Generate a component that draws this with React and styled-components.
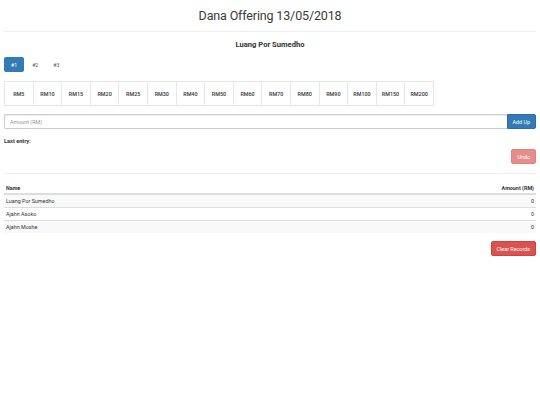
import React from 'react'
import styled, { createGlobalStyle } from 'styled-components'

const GlobalStyle = createGlobalStyle`
  * { box-sizing: border-box; }
  body {
    margin: 0;
    background: #fff;
    font-family: Roboto, "Liberation Sans", sans-serif;
    font-size: 5.6px;
    color: #333;
  }
`

const Page = styled.div`
  padding: 0 4px;
`

const Title = styled.h1`
  margin: 8px 0 0;
  font-size: 12.5px;
  line-height: 16px;
  font-weight: 400;
  letter-spacing: -0.15px;
  text-align: center;
  color: #3a3a3a;
`

const Rule = styled.hr`
  margin: ${p => p.$top || 6}px 0 0;
  border: 0;
  border-top: 1px solid #eee;
`

const Subtitle = styled.h4`
  margin: 8px 0 0;
  font-size: 7.6px;
  line-height: 10px;
  font-weight: 700;
  text-align: center;
`

const Tabs = styled.ul`
  display: flex;
  gap: 1px;
  list-style: none;
  margin: 7px 0 0;
  padding: 0;
`

const Tab = styled.li`
  height: 15px;
  padding: 0 7px;
  display: flex;
  align-items: center;
  border-radius: 2px;
  font-size: 5.2px;
  color: ${p => (p.$active ? '#fff' : '#555')};
  background: ${p => (p.$active ? '#337ab7' : 'transparent')};
`

const Amounts = styled.div`
  display: flex;
  margin-top: 9px;
`

const AmountBtn = styled.button`
  width: 29.6px;
  height: 25px;
  padding: 0;
  margin-left: ${p => (p.$first ? 0 : -1)}px;
  border: 1px solid #e6e6e6;
  background: #fff;
  font-family: inherit;
  font-size: 5.4px;
  font-weight: 500;
  color: #333;
`

const InputGroup = styled.div`
  display: flex;
  margin-top: 8px;
`

const Input = styled.input`
  flex: 1;
  height: 15px;
  padding: 0 5px;
  border: 1px solid #ccc;
  border-right: 0;
  border-radius: 2px 0 0 2px;
  font-family: inherit;
  font-size: 5.4px;
  color: #555;
  box-shadow: inset 0 1px 1px rgba(0, 0, 0, 0.075);
  &::placeholder { color: #999; }
`

const Button = styled.button`
  height: ${p => p.$h || 15}px;
  padding: 0 ${p => p.$px || 5}px;
  border: 1px solid ${p => p.$border};
  border-radius: ${p => p.$radius || '2px'};
  background: ${p => p.$bg};
  opacity: ${p => p.$faded ? 0.65 : 1};
  color: #fff;
  font-family: inherit;
  font-size: 5.4px;
`

const Label = styled.div`
  margin-top: 8px;
  font-size: 5.6px;
  font-weight: 700;
  line-height: 8px;
`

const RightRow = styled.div`
  display: flex;
  justify-content: flex-end;
  margin-top: ${p => p.$top}px;
`

const Table = styled.table`
  width: 100%;
  margin-top: 8px;
  border-collapse: collapse;
  font-size: 5.4px;
`

const Th = styled.th`
  height: 12px;
  padding: 0 2px 2px;
  text-align: ${p => p.$align || 'left'};
  font-weight: 700;
  border-bottom: 2px solid #ddd;
  vertical-align: bottom;
`

const Tr = styled.tr`
  background: ${p => (p.$striped ? '#f9f9f9' : '#fff')};
`

const Td = styled.td`
  height: 13px;
  padding: 0 2px;
  border-top: 1px solid #ddd;
  text-align: ${p => p.$align || 'left'};
`

const amounts = [5, 10, 15, 20, 25, 30, 40, 50, 60, 70, 80, 90, 100, 150, 200]
const rows = ['Luang Por Sumedho', 'Ajahn Asoko', 'Ajahn Moshe']

export default function App() {
  return (
    <Page>
      <GlobalStyle />
      <Title>Dana Offering 13/05/2018</Title>
      <Rule $top={7} />
      <Subtitle>Luang Por Sumedho</Subtitle>
      <Tabs>
        <Tab $active>#1</Tab>
        <Tab>#2</Tab>
        <Tab>#3</Tab>
      </Tabs>
      <Amounts>
        {amounts.map((a, i) => (
          <AmountBtn key={a} $first={i === 0}>RM{a}</AmountBtn>
        ))}
      </Amounts>
      <InputGroup>
        <Input placeholder="Amount (RM)" />
        <Button $h={15} $px={5} $bg="#337ab7" $border="#2e6da4" $radius="0 2px 2px 0">Add Up</Button>
      </InputGroup>
      <Label>Last entry:</Label>
      <RightRow $top={4}>
        <Button $h={15} $bg="#d9534f" $border="#d43f3a" $faded>Undo</Button>
      </RightRow>
      <Rule $top={9} />
      <Table>
        <thead>
          <tr>
            <Th>Name</Th>
            <Th $align="right">Amount (RM)</Th>
          </tr>
        </thead>
        <tbody>
          {rows.map((name, i) => (
            <Tr key={name} $striped={i % 2 === 0}>
              <Td>{name}</Td>
              <Td $align="right">0</Td>
            </Tr>
          ))}
        </tbody>
      </Table>
      <RightRow $top={8}>
        <Button $bg="#d9534f" $border="#d43f3a">Clear Records</Button>
      </RightRow>
    </Page>
  )
}
